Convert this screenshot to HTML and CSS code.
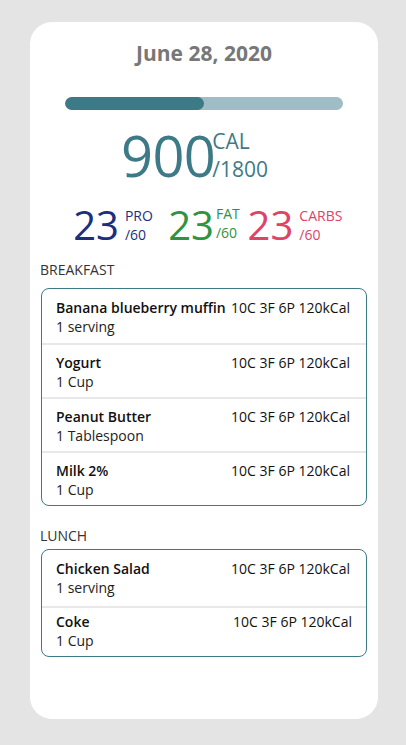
FILE: index.html
```html
<!DOCTYPE html>
<html>
<head>
<meta charset="utf-8">
<link rel="stylesheet" href="styles.css">
</head>
<body>
<div class="card">
  <h1 class="date">June 28, 2020</h1>
  <div class="bar"><div class="bar-fill" style="width:50%"></div></div>
  <div class="cal">
    <span class="cal-num">900</span>
    <div class="cal-side"><span class="cal-unit">CAL</span><span class="cal-goal">/1800</span></div>
  </div>
  <div class="macros">
    <div class="macro pro"><span class="m-num">23</span><div class="m-side"><span class="m-unit">PRO</span><span class="m-goal">/60</span></div></div>
    <div class="macro fat"><span class="m-num">23</span><div class="m-side"><span class="m-unit">FAT</span><span class="m-goal">/60</span></div></div>
    <div class="macro carb"><span class="m-num">23</span><div class="m-side"><span class="m-unit">CARBS</span><span class="m-goal">/60</span></div></div>
  </div>

  <div class="meal-label">BREAKFAST</div>
  <div class="meal">
    <div class="item"><div class="item-top"><span class="name">Banana blueberry muffin</span><span class="nutr">10C 3F 6P 120kCal</span></div><div class="qty">1 serving</div></div>
    <div class="item"><div class="item-top"><span class="name">Yogurt</span><span class="nutr">10C 3F 6P 120kCal</span></div><div class="qty">1 Cup</div></div>
    <div class="item"><div class="item-top"><span class="name">Peanut Butter</span><span class="nutr">10C 3F 6P 120kCal</span></div><div class="qty">1 Tablespoon</div></div>
    <div class="item"><div class="item-top"><span class="name">Milk 2%</span><span class="nutr">10C 3F 6P 120kCal</span></div><div class="qty">1 Cup</div></div>
  </div>

  <div class="meal-label lunch">LUNCH</div>
  <div class="meal lunch-box">
    <div class="item"><div class="item-top"><span class="name">Chicken Salad</span><span class="nutr">10C 3F 6P 120kCal</span></div><div class="qty">1 serving</div></div>
    <div class="item"><div class="item-top"><span class="name">Coke</span><span class="nutr">10C 3F 6P 120kCal</span></div><div class="qty">1 Cup</div></div>
  </div>
</div>
</body>
</html>
```
FILE: styles.css
```css
html, body {
  margin: 0;
  padding: 0;
  background: #e4e4e4;
  font-family: "Open Sans", "Noto Sans", sans-serif;
}
body {
  padding: 22px 28px 26px 30px;
}
.card {
  background: #fff;
  border-radius: 22px;
  height: 697px;
  box-sizing: border-box;
  padding: 17px 11px 0 11px;
}
.date {
  margin: 0;
  text-align: center;
  font-size: 21px;
  font-weight: 700;
  color: #777;
  line-height: 28px;
}
.bar {
  margin: 30px 24px 0 24px;
  height: 13px;
  border-radius: 7px;
  background: #9fbdc4;
  overflow: hidden;
}
.bar-fill {
  height: 100%;
  background: #3d7a87;
  border-radius: 7px;
}
.cal {
  display: flex;
  justify-content: center;
  color: #3d7a87;
  margin-top: 17px;
  padding-right: 19px;
}
.cal-num {
  font-size: 56px;
  line-height: 56px;
  letter-spacing: -0.6px;
}
.cal-side {
  display: flex;
  flex-direction: column;
  font-size: 21px;
  line-height: 24px;
  margin-left: -3px;
}
.cal-unit { margin-top: 2px; }
.cal-goal { margin-top: 4px; }
.macros {
  display: grid;
  grid-template-columns: 91px 91px 91px;
  justify-content: center;
  margin-top: 22px;
}
.macro {
  display: flex;
  justify-content: center;
}
.m-num {
  font-size: 40px;
  line-height: 40px;
}
.m-side {
  display: flex;
  flex-direction: column;
  font-size: 14px;
  line-height: 18px;
  margin-left: 6px;
}
.m-unit { margin-top: 2px; }
.m-goal { margin-top: 1px; }
.pro { color: #1b2f7c; }
.fat { color: #2e9440; }
.carb { color: #de4368; }
.fat .m-side { margin-left: 2px; }
.fat .m-unit { margin-top: 0; }
.carb .m-side { margin-left: 6px; }
.meal-label {
  font-size: 14px;
  line-height: 18px;
  color: #333;
  margin-top: 16px;
  margin-left: -1px;
}
.lunch { margin-top: 21px; }
.meal {
  margin-top: 9px;
  border: 1px solid #3d7a87;
  border-radius: 8px;
}
.lunch-box { margin-top: 4px; }
.item {
  padding: 8px 16px 0 14px;
  border-top: 2px solid #e8e8e8;
  height: 54px;
  box-sizing: border-box;
}
.item:first-child { border-top: none; height: 54px; padding-top: 9px; }
.lunch-box .item:first-child { height: 56px; padding-top: 9px; }
.lunch-box .item + .item { height: 50px; padding-top: 4px; padding-right: 14px; }
.item-top {
  display: flex;
  justify-content: space-between;
  font-size: 14px;
  line-height: 19px;
  color: #111;
}
.name { font-weight: 600; }
.qty {
  font-size: 14px;
  line-height: 19px;
  color: #222;
}
```
